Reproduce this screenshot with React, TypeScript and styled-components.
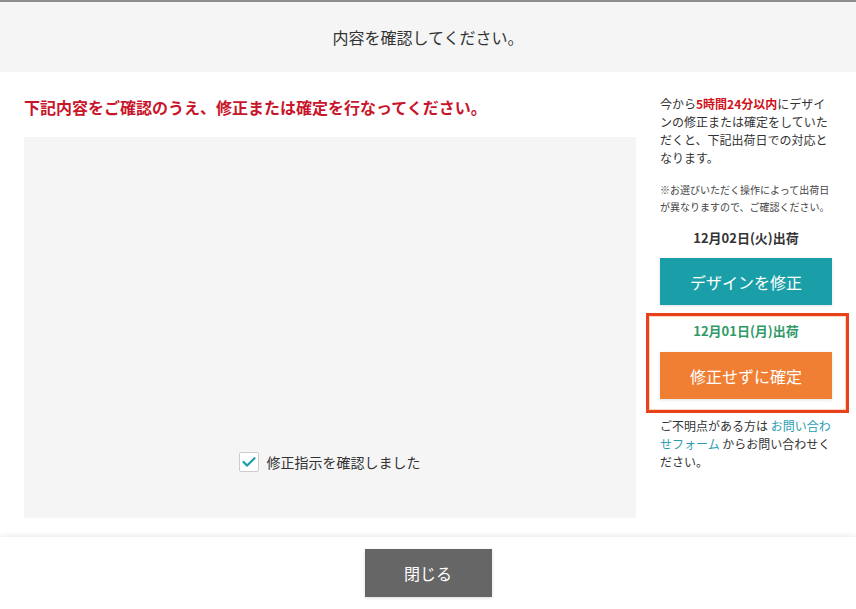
import styled, { createGlobalStyle } from "styled-components"

const GlobalStyle = createGlobalStyle`
    html, body {
        margin: 0;
        padding: 0;
        background: #ffffff;
    }
    body {
        font-family: "Noto Sans CJK JP", "Noto Sans", sans-serif;
        color: #333333;
    }
    * {
        box-sizing: border-box;
    }
`

const Page = styled.div`
    width: 856px;
    height: 609px;
    display: flex;
    flex-direction: column;
    border-top: 2px solid #8c8c8c;
    overflow: hidden;
`

const Header = styled.div`
    height: 70px;
    flex-shrink: 0;
    display: flex;
    align-items: center;
    justify-content: center;
    background-color: #f5f5f5;
    font-size: 16px;
    color: #333333;
`

const Body = styled.div`
    flex: 1;
    display: flex;
    gap: 24px;
    padding: 0 24px;
`

const Main = styled.div`
    width: 612px;
    display: flex;
    flex-direction: column;
`

const Lead = styled.h2`
    margin: 23px 0 0;
    font-size: 16px;
    line-height: 24px;
    font-weight: bold;
    color: #c8152b;
`

const Preview = styled.div`
    margin-top: 18px;
    height: 381px;
    background-color: #f5f5f5;
    display: flex;
    align-items: flex-end;
    justify-content: center;
    padding-bottom: 46px;
`

const CheckLabel = styled.label`
    display: flex;
    align-items: center;
    gap: 8px;
    font-size: 14px;
    color: #333333;
    margin-left: -1px;
`

const CheckBox = styled.span`
    width: 20px;
    height: 20px;
    border: 1px solid #cccccc;
    border-radius: 2px;
    background: #ffffff;
    display: flex;
    align-items: center;
    justify-content: center;
`

const Side = styled.div`
    width: 172px;
    padding-top: 23px;
    display: flex;
    flex-direction: column;
`

const Notice = styled.p`
    margin: 0;
    font-size: 12px;
    line-height: 18px;
    color: #333333;
`

const Strong = styled.span`
    color: #d0121b;
    font-weight: bold;
`

const Note = styled.p`
    margin: 14px 0 0;
    font-size: 10px;
    line-height: 17px;
    color: #444444;
    white-space: nowrap;
`

const ShipDate = styled.div<{ $tone: string }>`
    font-size: 13px;
    line-height: 20px;
    font-weight: bold;
    text-align: center;
    color: ${props => props.$tone};
`

const ActionButton = styled.button<{ $bg: string }>`
    width: 172px;
    height: 47px;
    border: none;
    border-radius: 0;
    background-color: ${props => props.$bg};
    color: #ffffff;
    font-family: inherit;
    font-size: 16px;
    box-shadow: 0 1px 3px rgba(0,0,0,0.12);
    cursor: pointer;
`

const FirstOption = styled.div`
    margin-top: 13px;
    display: flex;
    flex-direction: column;
    gap: 10px;
`

const Highlight = styled.div`
    margin: 8px -17px 0 -14px;
    padding: 5px 14px 11px 11px;
    border: 3px solid #e8421a;
    box-shadow: inset 0 0 0 1px #fbd6c6;
    display: flex;
    flex-direction: column;
    gap: 11px;
`

const Help = styled.p`
    margin: 4px 0 0;
    font-size: 12px;
    line-height: 18px;
    color: #333333;
`

const Link = styled.a`
    color: #2a9db0;
    text-decoration: none;
`

const Footer = styled.div`
    height: 72px;
    flex-shrink: 0;
    display: flex;
    justify-content: center;
    padding-top: 12px;
    box-shadow: 0 -2px 4px rgba(0,0,0,0.07);
    background: #ffffff;
`

const CloseButton = styled.button`
    width: 127px;
    height: 48px;
    border: none;
    background-color: #666666;
    color: #ffffff;
    font-family: inherit;
    font-size: 16px;
    line-height: 1;
    padding-bottom: 2px;
    box-shadow: 0 1px 3px rgba(0,0,0,0.15);
`

const App = () => {
    return (
        <>
            <GlobalStyle />
            <Page>
                <Header>内容を確認してください。</Header>
                <Body>
                    <Main>
                        <Lead>下記内容をご確認のうえ、修正または確定を行なってください。</Lead>
                        <Preview>
                            <CheckLabel>
                                <CheckBox>
                                    <svg width="14" height="14" viewBox="0 0 14 14">
                                        <polyline points="1.5,7 5.2,10.6 12.5,3.2" fill="none" stroke="#1ba0aa" strokeWidth="2.2" strokeLinecap="round" strokeLinejoin="round" />
                                    </svg>
                                </CheckBox>
                                修正指示を確認しました
                            </CheckLabel>
                        </Preview>
                    </Main>
                    <Side>
                        <Notice>
                            今から<Strong>5時間24分以内</Strong>にデザインの修正または確定をしていただくと、下記出荷日での対応となります。
                        </Notice>
                        <Note>
                            ※お選びいただく操作によって出荷日<br />が異なりますので、ご確認ください。
                        </Note>
                        <FirstOption>
                            <ShipDate $tone="#333333">12月02日(火)出荷</ShipDate>
                            <ActionButton $bg="#1a9fa9">デザインを修正</ActionButton>
                        </FirstOption>
                        <Highlight>
                            <ShipDate $tone="#2f9a68">12月01日(月)出荷</ShipDate>
                            <ActionButton $bg="#f07e33">修正せずに確定</ActionButton>
                        </Highlight>
                        <Help>
                            ご不明点がある方は <Link href="#">お問い合わせフォーム</Link> からお問い合わせください。
                        </Help>
                    </Side>
                </Body>
                <Footer>
                    <CloseButton>閉じる</CloseButton>
                </Footer>
            </Page>
        </>
    )
}

export default App
